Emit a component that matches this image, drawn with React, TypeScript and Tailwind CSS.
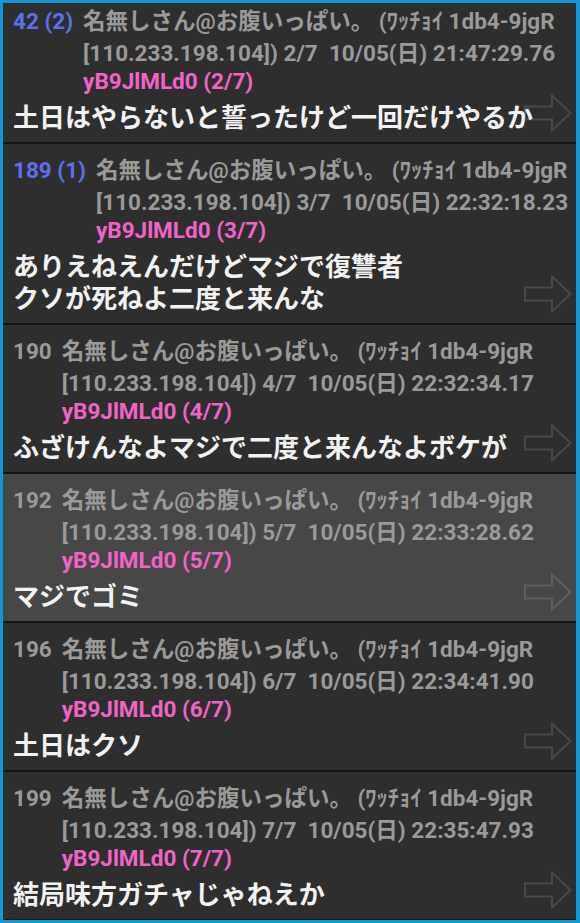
import React from "react";

type Post = {
  num: string;
  replied: boolean;
  idx: string;
  time: string;
  body: string[];
  highlight?: boolean;
};

const posts: Post[] = [
  { num: "42 (2)", replied: true, idx: "2/7", time: "21:47:29.76", body: ["土日はやらないと誓ったけど一回だけやるか"] },
  { num: "189 (1)", replied: true, idx: "3/7", time: "22:32:18.23", body: ["ありえねえんだけどマジで復讐者", "クソが死ねよ二度と来んな"] },
  { num: "190", replied: false, idx: "4/7", time: "22:32:34.17", body: ["ふざけんなよマジで二度と来んなよボケが"] },
  { num: "192", replied: false, idx: "5/7", time: "22:33:28.62", body: ["マジでゴミ"], highlight: true },
  { num: "196", replied: false, idx: "6/7", time: "22:34:41.90", body: ["土日はクソ"] },
  { num: "199", replied: false, idx: "7/7", time: "22:35:47.93", body: ["結局味方ガチャじゃねえか"] },
];

function Arrow() {
  return (
    <svg width="48" height="38" viewBox="0 0 48 38" className="absolute right-1 bottom-[10px]">
      <polygon
        points="1,12.5 28,12.5 28,1.5 46.5,19 28,36.5 28,25.5 1,25.5"
        fill="none"
        stroke="rgba(255,255,255,0.13)"
        strokeWidth="2"
        strokeLinejoin="miter"
      />
    </svg>
  );
}

function PostItem({ p }: { p: Post }) {
  return (
    <div
      className={`relative border-b-2 border-[#141414] pl-[10px] pr-1 pt-[10px] pb-[8px] ${
        p.highlight ? "bg-[#474747]" : "bg-[#2e2e2e]"
      }`}
    >
      <Arrow />
      <div className="relative">
        <div className="flex gap-2.5 text-[22.5px] font-bold leading-[32px]">
          <span className={`shrink-0 ${p.replied ? "text-[#5b70ee]" : "text-[#9a9a9a]"}`}>{p.num}</span>
          <div className="flex min-w-0 flex-col">
            <span className="whitespace-pre text-[#9a9a9a]">名無しさん@お腹いっぱい。 (ﾜｯﾁｮｲ 1db4-9jgR</span>
            <span className="whitespace-pre text-[#9a9a9a]">{`[110.233.198.104]) ${p.idx}  10/05(日) ${p.time}`}</span>
            <span className="whitespace-pre leading-[24px] text-[#f064c8]">{`yB9JlMLd0 (${p.idx})`}</span>
          </div>
        </div>
        <div className="mt-[9px] text-[26px] font-bold leading-[32px] text-[#f2f2f2]">
          {p.body.map((l, i) => (
            <div key={i} className="whitespace-nowrap">
              {l}
            </div>
          ))}
        </div>
      </div>
    </div>
  );
}

export default function App() {
  return (
    <div className="h-[923px] w-[580px] overflow-hidden border-[3px] border-r-4 border-[#0f98d4] bg-[#2e2e2e] font-[Roboto,'Noto_Sans_CJK_JP',sans-serif]">
      <div className="-mt-2 flex flex-col">
        {posts.map((p) => (
          <PostItem key={p.num} p={p} />
        ))}
      </div>
    </div>
  );
}
